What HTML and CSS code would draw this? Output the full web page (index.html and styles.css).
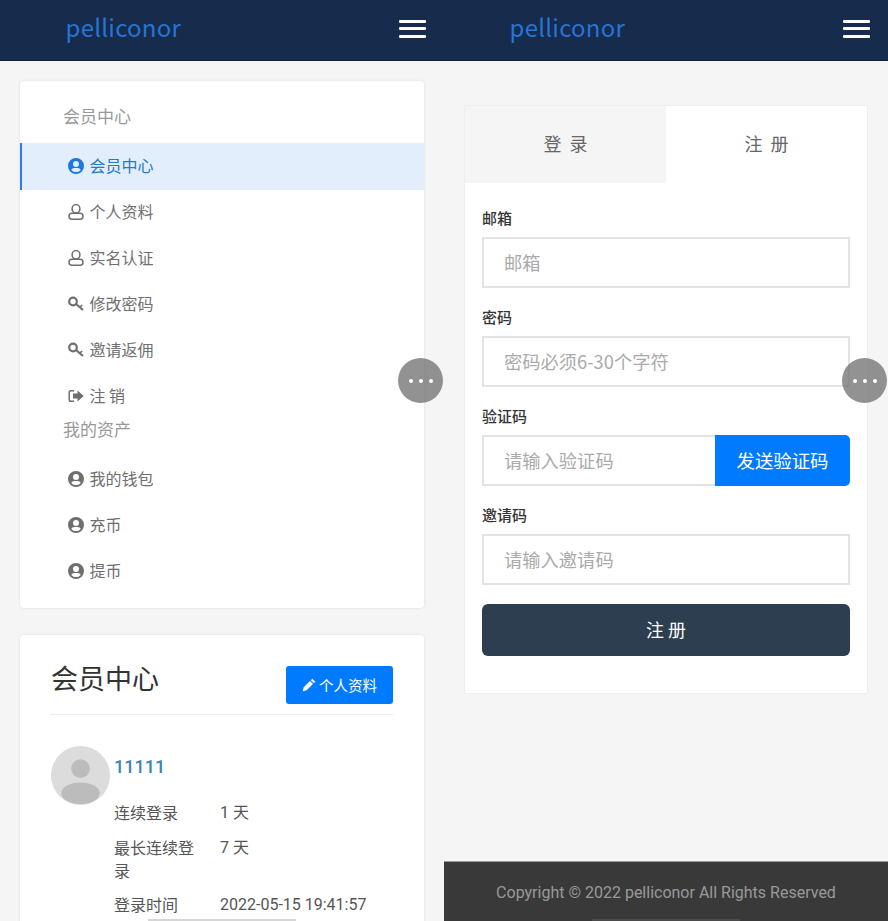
FILE: index.html
```html
<!DOCTYPE html>
<html lang="zh-CN">
<head>
  <meta charset="UTF-8" />
  <meta name="viewport" content="width=device-width, initial-scale=1.0"/>
  <title>pelliconor</title>
  <link rel="stylesheet" href="styles.css">
</head>
<body>

  <svg class="icon-defs" width="0" height="0">
    <symbol id="i-user-circle" viewBox="0 0 16 16">
      <path fill="currentColor" fill-rule="evenodd" d="M8 0a8 8 0 1 0 0 16A8 8 0 0 0 8 0zm0 3.100a3 3 0 1 1 0 6 3 3 0 0 1 0-6zm0 11a6.200 6.200 0 0 1-4.700-2.200c.6-1.100 1.700-1.800 3-1.800h3.400c1.300 0 2.400.7 3 1.800A6.200 6.200 0 0 1 8 14.100z"/>
    </symbol>
    <symbol id="i-user" viewBox="0 0 16 16">
      <ellipse cx="8" cy="4.800" rx="3.900" ry="4.200" fill="none" stroke="currentColor" stroke-width="1.500"/>
      <rect x="1" y="9.200" width="14" height="6" rx="3" fill="none" stroke="currentColor" stroke-width="1.500"/>
    </symbol>
    <symbol id="i-key" viewBox="0 0 16 16">
      <circle cx="5" cy="5.500" r="3.800" fill="none" stroke="currentColor" stroke-width="2.200"/>
      <path fill="none" stroke="currentColor" stroke-width="2.200" d="M8 8l7 6"/>
      <path fill="none" stroke="currentColor" stroke-width="1.600" d="M11.800 11.200l2.400-2.200"/>
    </symbol>
    <symbol id="i-logout" viewBox="0 0 16 16">
      <path fill="none" stroke="currentColor" stroke-width="1.500" d="M6 2.800H3a1.800 1.800 0 0 0-1.800 1.800v6.800A1.800 1.800 0 0 0 3 13.200h3"/>
      <path fill="currentColor" d="M9.500 2.500L15.800 8l-6.300 5.500V10.400H5V5.600h4.500z"/>
    </symbol>
    <symbol id="i-pencil" viewBox="0 0 16 16">
      <path fill="currentColor" d="M11.800.8l3.400 3.400-1.700 1.700-3.400-3.400zM9.100 3.500l3.400 3.400-7.200 7.200-4.500 1.100 1.100-4.500z"/>
    </symbol>
  </svg>

  <div class="screens">

    <section class="pane">
      <header class="topbar">
        <span class="logo">pelliconor</span>
        <div class="burger"><i></i><i></i><i></i></div>
      </header>

      <main class="pane-body">
        <nav class="card menu">
          <div class="menu-title">会员中心</div>
          <a class="menu-item active"><svg class="icon"><use href="#i-user-circle"/></svg>会员中心</a>
          <a class="menu-item"><svg class="icon"><use href="#i-user"/></svg>个人资料</a>
          <a class="menu-item"><svg class="icon"><use href="#i-user"/></svg>实名认证</a>
          <a class="menu-item"><svg class="icon"><use href="#i-key"/></svg>修改密码</a>
          <a class="menu-item"><svg class="icon"><use href="#i-key"/></svg>邀请返佣</a>
          <a class="menu-item"><svg class="icon"><use href="#i-logout"/></svg>注 销</a>
          <div class="menu-title">我的资产</div>
          <a class="menu-item"><svg class="icon"><use href="#i-user-circle"/></svg>我的钱包</a>
          <a class="menu-item"><svg class="icon"><use href="#i-user-circle"/></svg>充币</a>
          <a class="menu-item"><svg class="icon"><use href="#i-user-circle"/></svg>提币</a>
        </nav>

        <div class="card profile">
          <div class="profile-head">
            <h2>会员中心</h2>
            <a class="btn-edit"><svg class="icon-small"><use href="#i-pencil"/></svg>个人资料</a>
          </div>
          <div class="profile-body">
            <svg class="avatar" viewBox="0 0 60 60">
              <circle cx="30" cy="30" r="30" fill="#dcdcdc"/>
              <circle cx="30" cy="23" r="9.500" fill="#bcbcbc"/>
              <ellipse cx="30" cy="48" rx="19.500" ry="11" fill="#bcbcbc"/>
            </svg>
            <div class="profile-info">
              <div class="username">11111</div>
              <dl class="stats">
                <dt>连续登录</dt><dd>1 天</dd>
                <dt>最长连续登录</dt><dd>7 天</dd>
                <dt>登录时间</dt><dd>2022-05-15 19:41:57</dd>
              </dl>
            </div>
          </div>
        </div>
      </main>

      <div class="float-btn"><i></i><i></i><i></i></div>
      <div class="home-bar"></div>
    </section>

    <section class="pane">
      <header class="topbar">
        <span class="logo">pelliconor</span>
        <div class="burger"><i></i><i></i><i></i></div>
      </header>

      <main class="pane-body register">
        <div class="form-card">
          <div class="tabs">
            <a class="tab">登 录</a>
            <a class="tab current">注 册</a>
          </div>
          <form class="form">
            <label>邮箱</label>
            <input type="text" placeholder="邮箱">
            <label>密码</label>
            <input type="password" placeholder="密码必须6-30个字符">
            <label>验证码</label>
            <div class="code-row">
              <input type="text" placeholder="请输入验证码">
              <button type="button" class="btn-code">发送验证码</button>
            </div>
            <label>邀请码</label>
            <input type="text" placeholder="请输入邀请码">
            <button type="button" class="btn-submit">注 册</button>
          </form>
        </div>
      </main>

      <footer class="footer">Copyright © 2022 pelliconor All Rights Reserved</footer>

      <div class="float-btn"><i></i><i></i><i></i></div>
      <div class="home-bar"></div>
    </section>

  </div>

</body>
</html>
```

FILE: styles.css
```css
:root {
  --bg-color: #f5f5f5;
  --nav-color: #172b4d;
  --blue: #007bff;
  --line: #e3e3e3;
}

* {
  box-sizing: border-box;
}

body {
  margin: 0;
  background-color: var(--bg-color);
  font-family: "Noto Sans CJK SC", "Noto Sans", sans-serif;
  color: #333;
}

.icon-defs {
  position: absolute;
}

.screens {
  display: grid;
  grid-template-columns: 444px 444px;
  height: 921px;
  overflow: hidden;
}

.pane {
  position: relative;
  display: flex;
  flex-direction: column;
  height: 921px;
  overflow: hidden;
}

.topbar {
  flex: none;
  display: flex;
  align-items: center;
  justify-content: space-between;
  height: 61px;
  padding: 0 18px 3px 65.500px;
  background-color: var(--nav-color);
  border-bottom: 1px solid #0f1f3a;
}

.logo {
  margin-bottom: 4px;
  font-size: 24px;
  line-height: 32px;
  letter-spacing: .25px;
  color: #2475d6;
}

.burger {
  display: flex;
  flex-direction: column;
  gap: 4.500px;
  width: 27px;
}

.burger i {
  display: block;
  height: 3px;
  background-color: #fff;
  border-radius: 1px;
}

.pane-body {
  padding: 20px 20px 0;
}

.card {
  background-color: #fff;
  border-radius: 4px;
  box-shadow: 0 0 3px rgba(0, 0, 0, .1);
}

/* menu */
.menu {
  padding: 25px 0 14px;
}

.menu-title {
  height: 22px;
  margin-bottom: 15px;
  padding-left: 43px;
  font-size: 17px;
  line-height: 20px;
  color: #999;
}

.menu-item {
  display: flex;
  align-items: center;
  height: 46px;
  padding: 0 0 3px 47.500px;
  font-size: 16px;
  color: #6f6f6f;
}

.menu-item.active {
  height: 47px;
  margin-bottom: -1px;
  padding-left: 45.500px;
  border-left: 2px solid #2a7de1;
  background-color: #e2eefc;
  color: #1f7bc8;
}

.menu-item .icon {
  flex: none;
  width: 16px;
  height: 16px;
  margin: 2px 6px 0 0;
}

.menu-item.active .icon {
  color: #1a78e0;
}

/* member card */
.profile {
  margin-top: 27px;
  padding: 28px 31px 60px 30px;
}

.profile-head {
  display: flex;
  align-items: flex-start;
  justify-content: space-between;
  height: 52px;
  border-bottom: 1px solid #eee;
}

.profile-head h2 {
  margin: 0 0 0 1px;
  font-size: 27px;
  font-weight: 400;
  line-height: 30px;
  color: #333;
}

.btn-edit {
  display: flex;
  align-items: center;
  justify-content: center;
  width: 107px;
  height: 38px;
  margin-top: 3px;
  padding-bottom: 2px;
  background-color: var(--blue);
  border-radius: 3px;
  font-size: 14.500px;
  color: #fff;
}

.icon-small {
  width: 14px;
  height: 14px;
  margin: 2px 3px 0 0;
}

.profile-body {
  display: flex;
  align-items: flex-start;
  gap: 4px;
  padding: 31px 0 0 1px;
}

.avatar {
  flex: none;
  width: 59px;
  height: 59px;
}

.profile-info {
  flex: 1;
}

.username {
  height: 42px;
  font-family: Roboto, sans-serif;
  font-size: 18px;
  font-weight: 500;
  line-height: 42px;
  color: #3b85b4;
}

.stats {
  display: grid;
  grid-template-columns: 82px 1fr;
  column-gap: 24px;
  row-gap: 11.500px;
  margin: 13px 0 0;
  font-size: 16px;
  line-height: 23px;
  color: #555;
}

.stats dd {
  margin: 0;
  font-family: Roboto, "Noto Sans CJK SC", sans-serif;
  white-space: nowrap;
}

/* register */
.register {
  padding-top: 44px;
}

.form-card {
  background-color: #fff;
  border: 1px solid #eee;
}

.tabs {
  display: grid;
  grid-template-columns: 1fr 1fr;
  height: 77px;
}

.tab {
  display: flex;
  align-items: center;
  justify-content: center;
  padding: 0 0 4px 2px;
  background-color: var(--bg-color);
  font-size: 18px;
  letter-spacing: 2px;
  color: #666;
}

.tab.current {
  background-color: #fff;
}

.form {
  display: flex;
  flex-direction: column;
  padding: 24px 17px 37px;
}

.form label {
  height: 22px;
  margin-bottom: 8px;
  font-size: 15px;
  font-weight: 500;
  line-height: 22px;
  color: #333;
}

.form input {
  display: block;
  width: 100%;
  height: 51px;
  margin-bottom: 18px;
  padding: 0 20px 1px;
  background-color: #fff;
  border: 2px solid var(--line);
  border-radius: 0;
  font-family: inherit;
  font-size: 18.300px;
  color: #333;
}

.form input::placeholder {
  color: #aaa;
}

.code-row {
  display: flex;
}

.code-row input {
  flex: 1;
  min-width: 0;
  border-right: none;
}

.btn-code {
  flex: none;
  width: 135px;
  height: 51px;
  padding-bottom: 2px;
  background-color: var(--blue);
  border: none;
  border-radius: 0 5px 5px 0;
  font-family: inherit;
  font-size: 18.400px;
  color: #fff;
}

.btn-submit {
  height: 52px;
  margin-top: 1px;
  padding-bottom: 3px;
  background-color: #2c3e50;
  border: none;
  border-radius: 6px;
  font-family: inherit;
  font-size: 18px;
  color: #fff;
}

.footer {
  flex: none;
  display: flex;
  justify-content: center;
  height: 60px;
  margin-top: auto;
  padding-top: 20px;
  background-color: #393939;
  border-top: 1px solid #999;
  font-family: Roboto, sans-serif;
  font-size: 16px;
  line-height: 22px;
  color: #999;
}

/* floating bits sitting over the page */
.float-btn {
  position: absolute;
  top: 358px;
  right: 1px;
  display: flex;
  align-items: center;
  justify-content: center;
  gap: 6px;
  width: 45px;
  height: 45px;
  background-color: rgba(110, 110, 110, .75);
  border-radius: 50%;
}

.float-btn i {
  display: block;
  width: 4px;
  height: 4px;
  background-color: #fff;
  border-radius: 50%;
}

.home-bar {
  position: absolute;
  left: 148px;
  bottom: 0;
  width: 148px;
  height: 2px;
  background-color: rgba(120, 120, 120, .3);
}
```
